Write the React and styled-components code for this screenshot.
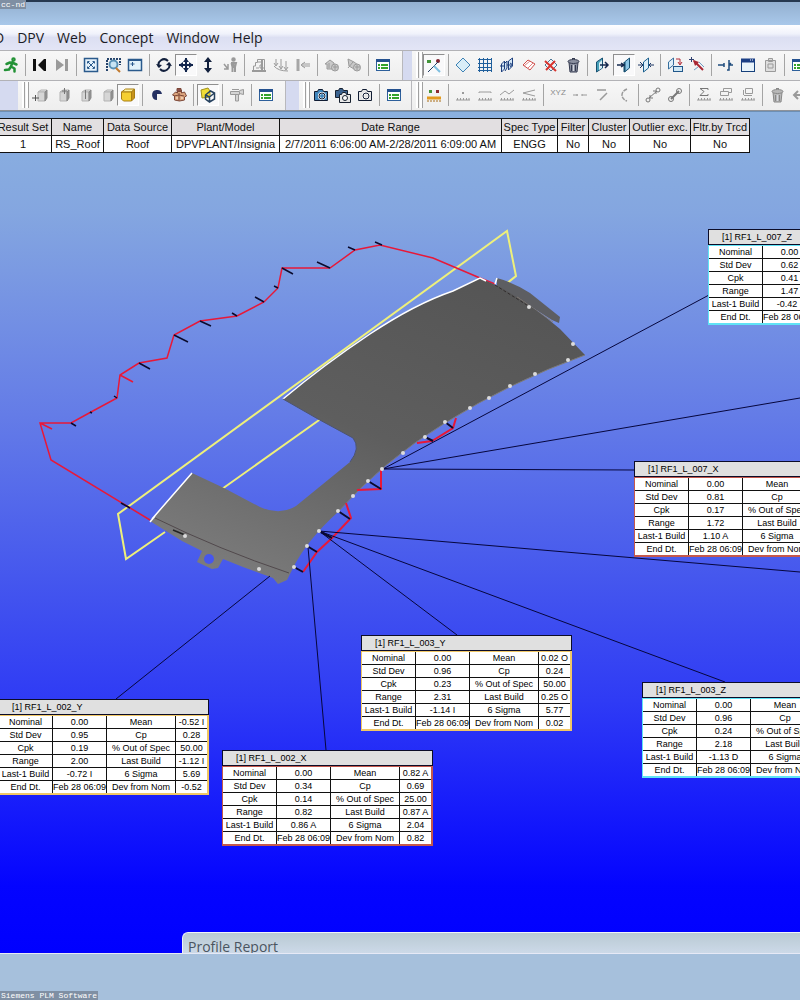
import styled, { createGlobalStyle } from 'styled-components';

const GlobalStyle = createGlobalStyle`
  * {
    box-sizing: border-box;
  }

  body {
    margin: 0;
    overflow: hidden;
    font-family: "Liberation Sans", Arial, sans-serif;
    color: #111;
  }
`;

const Shell = styled.div`
  display: flex;
  flex-direction: column;
  height: 100vh;
  overflow: hidden;
  background: #a6c0dc;
`;

const TitleBar = styled.header`
  flex: none;
  height: 25px;
  border-top: 2px solid #26384f;
  background: linear-gradient(#93b0d0, #a9c8ea);
`;

const Watermark = styled.span`
  position: absolute;
  left: 0;
  ${(p) => (p.$bottom ? 'bottom: 0;' : 'top: 0;')}
  padding: 0 1px;
  font: 8px/9px "Liberation Mono", monospace;
  color: #fff;
  background: #7f8fa3;
`;

const MenuBar = styled.nav`
  flex: none;
  display: flex;
  align-items: center;
  gap: 13px;
  height: 25px;
  margin-left: -6px;
  background: linear-gradient(#fff 0%, #f0f2fb 35%, #dcdff2 50%, #e3e5f6 100%);
`;

const MenuItem = styled.button`
  padding: 0;
  border: 0;
  background: none;
  font: 14px/20px "Open Sans", "Noto Sans", sans-serif;
  color: #1b1b25;
`;

const ToolRow = styled.div`
  flex: none;
  display: flex;
  height: 30px;
  overflow: hidden;
  background: #d5daf0;
  border-top: 1px solid #b2b2b6;
`;

const Toolbar = styled.div`
  flex: none;
  display: flex;
  align-items: center;
  padding-right: ${(p) => p.$end || 8}px;
  padding-bottom: 2px;
  margin-right: ${(p) => p.$gap || 0}px;
  background: linear-gradient(#f7f7f7, #eeeeee);
  border-right: 1px solid #b8b8bc;
`;

const Spacer = styled.div`
  flex: none;
  width: 18px;
`;

const Grip = styled.span`
  width: 11px;
  height: 26px;
  display: flex;
  gap: 1px;
  padding-left: 4px;

  &::before,
  &::after {
    content: "";
    width: 3px;
    background: #fff;
    border-right: 1px solid #a0a0a0;
  }
`;

const Separator = styled.span`
  width: 7px;
  height: 22px;
  background: linear-gradient(#a4a4a4, #a4a4a4) 3px 0 / 1px 100% no-repeat;
`;

const ToolButton = styled.button`
  width: 22px;
  height: 22px;
  display: grid;
  place-items: center;
  padding: 0;
  background: ${(p) => (p.$pressed ? '#f9f9fa' : 'none')};
  border: 1px solid transparent;
  ${(p) => p.$pressed && 'border-color: #8f8f8f #fff #fff #8f8f8f;'}
`;

const RowEdge = styled.div`
  flex: none;
  height: 2px;
  background: #6d8fb4;
  border-top: 1px solid #8e9299;
`;

const Viewport = styled.main`
  position: relative;
  flex: 1;
  overflow: hidden;
  padding-top: 6px;
  background: linear-gradient(#8bb1e0 0%, #84a6e0 12%, #647ce7 36%, #4152ef 58%, #2f3bf5 70%, #0404ff 92%, #0000ff 100%);
  border-bottom: 1px solid #e6e9f6;
`;

const ResultTable = styled.table`
  position: relative;
  margin-left: -6px;
  border-collapse: collapse;
  table-layout: fixed;
  width: 755px;
  font-size: 11px;
  line-height: 14px;
  background: #fff;

  th,
  td {
    height: 17px;
    padding: 0;
    border: 1px solid #111;
    font-weight: normal;
    text-align: center;
    white-space: nowrap;
  }

  th {
    background: #e2dfe1;
  }
`;

const Drawing = styled.svg`
  position: absolute;
  left: 0;
  top: 0;
`;

const Callout = styled.section`
  position: absolute;
  left: ${(p) => p.$x}px;
  top: ${(p) => p.$y}px;
  width: 211px;
  font-size: 9px;
  line-height: 11px;
  white-space: nowrap;
  color: #000;
`;

const CalloutTitle = styled.h2`
  height: 16px;
  margin: 0;
  padding: 0 0 0 13px;
  border: 1px solid #0c0c28;
  background: #e0e0e0;
  font-size: 9px;
  line-height: 14px;
  font-weight: normal;
`;

const CalloutTable = styled.table`
  width: 100%;
  height: 80px;
  table-layout: fixed;
  border-collapse: separate;
  border-spacing: 0;
  background: #fff;
  border: solid ${(p) => p.$tone};
  border-width: 1px 2px 2px 1px;

  td {
    padding: 0;
    text-align: center;
    border-right: 1px solid #111;
    border-bottom: 1px solid #111;
  }

  td:last-child {
    border-right: 0;
  }

  tr:last-child td {
    border-bottom: 0;
  }
`;

const DockTab = styled.div`
  position: absolute;
  left: 182px;
  right: 0;
  bottom: -1px;
  height: 22px;
  padding: 0 5px;
  overflow: hidden;
  border: 1px solid #eef2fa;
  border-right: 0;
  border-bottom-color: #46586c;
  border-radius: 6px 0 0 0;
  background: linear-gradient(#b9cad3, #ccd9e8);
  font: 14px/28px "Open Sans", "Noto Sans", sans-serif;
  color: #4b5560;
`;

const StatusArea = styled.footer`
  flex: none;
  height: 46px;
  background: #a6c0dc;
`;

const GREY = '#9a9a9a';

const ruler = (c = GREY) => <path d="M1 13h14M2.500 11v2M5.500 11v2M8.500 11v2M11.500 11v2M14 11v2" stroke={c} />;

const panel = (
  <g>
    <rect x="1.500" y="2.500" width="13" height="11" fill="#fff" stroke="#2d5f9b" />
    <path d="M1 3.500h14" stroke="#24518f" strokeWidth="3" />
    <path d="M3 8h2M3 11h2M6 8h7M6 11h7" stroke="#35a32c" strokeWidth="2" />
  </g>
);

const greyCube = (extra) => (
  <g>
    <path d="M6 5l3-2h6l-2 2z" fill="#e4e4e4" stroke="#b3b3b3" />
    <path d="M6 5h7v9H6z" fill="#d6d6d6" stroke="#b3b3b3" />
    <path d="M13 5l2-2v8l-2 3z" fill="#929292" stroke="#8a8a8a" />
    {extra}
  </g>
);

const camera = (body) => (
  <g stroke="#101c33">
    <path d="M1.500 4.500h3l1-2h4l1 2h4v9h-13z" fill={body} />
    <circle cx="9" cy="9" r="3" fill={body} stroke="#fff" strokeWidth="2" />
    <circle cx="9" cy="9" r="3" />
  </g>
);

const bin = (fill, line) => (
  <g stroke={line}>
    <path d="M4 5.500h9l-1 9.500H5z" fill={fill} />
    <ellipse cx="8.500" cy="4.500" rx="5.500" ry="2" fill={fill} />
    <path d="M6.500 8v6M10.500 8v6M7 1.500h3" />
    <path d="M8.500 8v6" stroke="#d4d7de" />
  </g>
);

const slab = (fill) => <path d="M5.500 5l5-4v10l-5 4z" fill={fill} stroke="#1c5f8e" />;

const glyphs = {
  run: (
    <g stroke="#239236" strokeWidth="2.500" strokeLinecap="round" strokeLinejoin="round">
      <path d="M9.500 5L8 9.500l3.500 2v3M8 9.500L6 12.500 2 13M3.500 7l3.500-1.500 3 .5 3.500 1.500" />
      <circle cx="10.500" cy="2.500" r="1" />
    </g>
  ),
  first: (
    <g fill="#111">
      <path d="M1 2h3v12H1zM12 2h2v12h-2zM12 2v12L6 8z" />
    </g>
  ),
  last: (
    <g fill={GREY}>
      <path d="M2 2l8 6-8 6zM11 2h3v12h-3z" />
    </g>
  ),
  fit: (
    <g stroke="#2a5a8c">
      <rect x="1.500" y="1.500" width="13" height="13" fill="#e4f1fa" strokeWidth="1.500" />
      <path d="M4.500 6.500v-2h2M9.500 4.500h2v2M11.500 9.500v2h-2M6.500 11.500h-2v-2M5 5l6 6M11 5l-6 6" />
    </g>
  ),
  zoomBox: (
    <g>
      <path d="M2 14V2h13v6" stroke="#26446b" strokeWidth="2" strokeDasharray="2 1" />
      <circle cx="8.500" cy="7.500" r="4" fill="#c9e5f4" stroke="#5a91b5" strokeWidth="2" />
      <path d="M11 11l4 4" stroke="#c27a2e" strokeWidth="2" />
    </g>
  ),
  box: (
    <g stroke="#2a5a8c">
      <rect x="1.500" y="2.500" width="13" height="11" fill="#e2f3fa" strokeWidth="1.500" />
      <path d="M1 3h14" strokeWidth="2" />
      <path d="M5.500 5v4M3.500 7h4" />
    </g>
  ),
  rotate: (
    <g stroke="#12203d" strokeWidth="2">
      <path d="M3 10a5.500 5.500 0 0 1 9-6M13 6a5.500 5.500 0 0 1-9 6" />
      <path d="M0 7l3 4 3-3zM16 9l-3-4-3 3z" fill="#12203d" stroke="none" />
    </g>
  ),
  pan: (
    <g fill="#12254c">
      <path d="M8 1v14M1 8h14" stroke="#12254c" strokeWidth="2" />
      <path d="M8 1l3 4H5zM8 15l3-4H5zM1 8l4-3v6zM15 8l-4-3v6z" />
    </g>
  ),
  upDown: (
    <g fill="#12203d">
      <path d="M8 3v10" stroke="#12203d" strokeWidth="2" />
      <path d="M8 0l4 5H4zM8 16l4-5H4z" />
    </g>
  ),
  walk: (
    <g stroke={GREY} strokeWidth="1.500">
      <path d="M2 7l4 5M6 7v5H2" />
      <path d="M9 6h5l-1 4v5M9.500 6l1 4v5M11.500 6v5" strokeWidth="2" />
      <circle cx="11.500" cy="2.500" r="1.500" fill={GREY} />
    </g>
  ),
  partDown: (
    <g stroke={GREY}>
      <path d="M1 14h14" strokeWidth="2" />
      <path d="M2.500 13V9h2V5.500h2v-3h7V13M7 5h4v3H9v3h4M5 11h3" />
      <path d="M11 3v10" strokeWidth="2" />
    </g>
  ),
  arrowsDown: (
    <g stroke={GREY}>
      <path d="M3 2v6M8 2v9M13 4v8M1 6l2 3 2-3M6 9l2 3 2-3M11 10l2 3 2-3M1 9q4 5 14 5" />
    </g>
  ),
  arrowLeft: (
    <g>
      <path d="M3 2v12" stroke="#a6a6a6" strokeWidth="3" />
      <path d="M10 5L6 8l4 3M7 7h8M7 9h8" stroke={GREY} />
    </g>
  ),
  houseA: (
    <g fill="#c9c9c9" stroke={GREY}>
      <path d="M1 7l5-4 4 3v6H3V7z" />
      <circle cx="11" cy="10.500" r="3.500" />
      <path d="M9 10h5M11 8v5M5 6v5" />
    </g>
  ),
  houseB: (
    <g fill="#c9c9c9" stroke={GREY}>
      <path d="M2 2l6 3 4 3-4 4-5-3z" />
      <circle cx="11" cy="10.500" r="3.500" />
      <path d="M2 11l5-6M9 10h5M11 8v5" />
    </g>
  ),
  report: panel,
  points: (
    <g>
      <path d="M1 3h4v3H1z" fill="#439439" />
      <circle cx="12" cy="4" r="2" fill="#7e2430" />
      <path d="M12 5L2 15" stroke="#213b63" />
      <path d="M8 9l6 6" stroke="#7dbfe0" strokeWidth="2" />
    </g>
  ),
  diamond: <path d="M8 1l7 7-7 7-7-7z" fill="#d9eef8" stroke="#3e82b5" />,
  grid: <path d="M2.500 1v14M6.500 1v14M10.500 1v14M14.500 1v14M1 2.500h14M1 6.500h14M1 10.500h14M1 13.500h14" stroke="#1f5f9c" />,
  layers: (
    <g stroke="#1d3f7d" fill="#d3e6f5">
      <path d="M2.500 7l3-3v8l-3 3zM9.500 4l4-3v8l-4 4z" />
      <path d="M6 6l2-2v7l-2 3M1 9h4M8 8h6M11 6l3 2-3 2" />
    </g>
  ),
  diamondRed: (
    <g>
      <path d="M7 3l7 4-5 6-7-5z" fill="#fff" stroke="#cf4c48" />
      <path d="M3 9l6-5M6 12l6-6" stroke="#e08080" />
    </g>
  ),
  diamondOff: (
    <g>
      <path d="M8 2l6 6-6 6-6-6z" fill="#eef4f8" stroke="#4c7696" />
      <path d="M2 4l11 10M12 4L3 13" stroke="#d8342f" strokeWidth="2" />
    </g>
  ),
  bin: bin('#8b90a0', '#353b50'),
  slabRight: (
    <g>
      <path d="M2.500 5l6-4v10l-6 4z" fill="#46a0b8" stroke="#164f70" />
      <path d="M5 6l3-3v8l-3 2z" fill="#d9eef4" />
      <path d="M6 8h8M11 5l3 3-3 3" stroke="#15284d" strokeWidth="1.500" />
    </g>
  ),
  slabLeft: (
    <g>
      <path d="M8.500 5l5-4v10l-5 4z" fill="#8cc6e6" stroke="#164f70" />
      <path d="M8.500 5v10" stroke="#164f70" strokeWidth="2" />
      <path d="M1 8h7M5 6l3 2-3 2" stroke="#15284d" strokeWidth="1.500" />
    </g>
  ),
  slabBoth: (
    <g>
      {slab('#dceffa')}
      <path d="M0 8h5M2 5l3 3-3 3M11 8h5M13 6l-2 2 2 2" stroke="#1c3765" />
    </g>
  ),
  copyPlane: (
    <g>
      <path d="M1.500 5l5-4v7l-5 4z" fill="#e0f0fa" stroke="#356e9d" />
      <path d="M9 2h4v5M11 5l2 3 2-3" stroke="#b42b36" />
      <rect x="6.500" y="9.500" width="9" height="5" fill="#cfe8f5" stroke="#21578a" />
    </g>
  ),
  pick: (
    <g>
      <path d="M2.500 0v5M0 2.500h5" stroke="#30406f" />
      <path d="M5 4l9 9" stroke="#a92734" strokeWidth="2" />
      <path d="M4 3l6 2-4 4z" fill="#a92734" />
      <path d="M10 5l5 5M5 13l4-3" stroke="#6f9cc4" />
    </g>
  ),
  axis: <path d="M0 8h6M9 13h2V8h4M11 3v5M13 6l-2 2M6 6v4" stroke="#1f4c7d" strokeWidth="1.500" />,
  window: (
    <g>
      <rect x="1.500" y="2.500" width="13" height="12" fill="#e9f4fb" stroke="#16407b" />
      <path d="M1 3.500h14" stroke="#1b3f86" strokeWidth="4" />
      <path d="M10 3h1M12 3h1" stroke="#fff" />
    </g>
  ),
  clipboard: (
    <g stroke={GREY}>
      <path d="M3.500 3.500h10v11h-10zM6.500 1.500h4v3h-4z" fill="#dedede" />
      <path d="M6 7h5v4H6z" />
    </g>
  ),
  cubeAdd: greyCube(<path d="M3.500 8v6M0 11h7" stroke="#555" />),
  cubeUp: greyCube(<path d="M10.500 1v6M8 4h5" stroke="#777" />),
  cubeLine: greyCube(<path d="M9.500 3v9" stroke="#777" />),
  cube: greyCube(null),
  cubeYellow: (
    <g stroke="#a97f12">
      <path d="M1.500 5l4-3h9l-3 3z" fill="#fff3a0" />
      <path d="M1.500 5h10v9h-8l-2-2z" fill="#f5cf31" />
      <path d="M11.500 5l3-3v9l-3 3z" fill="#c7931d" />
    </g>
  ),
  pie: <path d="M8 8V13A5 5 0 1 1 13 7H8z" fill="#243061" />,
  parts: (
    <g stroke="#7d4838">
      <path d="M1.500 8l3-3 2 1v-3h4v3l3-1 2 4-2 1v3l-5 1-5-1V9z" fill="#dda67e" />
      <path d="M6 1.500h4v3H6z" fill="#8c4f4a" />
      <path d="M8 6v8M3 9l5-1 5 1" />
      <path d="M5 11h2M10 11h2" stroke="#fff0dc" />
    </g>
  ),
  cubeWire: (
    <g>
      <path d="M1 3l7-2 2 3v6l-8 1z" fill="#f0dc35" stroke="#a1921e" />
      <path d="M5.500 8l5-4 4 2v6l-5 3-4-3zM5.500 8l4 2v5M9.500 10l5-4" stroke="#26425f" strokeWidth="1.500" />
    </g>
  ),
  pipe: (
    <g stroke={GREY} fill="#d5d5d5">
      <path d="M1.500 4.500h9v3h-9zM10.500 3.500l4-1v5l-4-1M6.500 8v6h3V8" />
      <path d="M3 2.500h7" />
    </g>
  ),
  camera: camera('#3f86bd'),
  cameras: (
    <g>
      <path d="M0.500 3.500h3l1-2h3l1 2h4v7h-12z" fill="#3a628f" stroke="#16202f" />
      <path d="M4.500 7.500h2l1-2h3l1 2h4v8h-11z" fill="#e8e8e8" stroke="#16202f" />
      <circle cx="10" cy="11" r="2.500" fill="#fff" stroke="#16202f" />
    </g>
  ),
  cameraPlain: camera('#e6e6e6'),
  pointsRuler: (
    <g>
      <path d="M3 3h3v3H3z" fill="#439439" />
      <path d="M10 3h3v3h-3z" fill="#8d2a2e" />
      <path d="M1 11h14" stroke="#e39a1f" strokeWidth="3" />
      <path d="M1 14h14" stroke="#a96c14" strokeDasharray="2 1" />
    </g>
  ),
  rulerDot: <g>{ruler()}<path d="M7 5h2v2H7z" fill={GREY} /></g>,
  rulerFlat: <g>{ruler()}<path d="M2 6V5h12v1" stroke={GREY} /></g>,
  rulerWave: <g>{ruler()}<path d="M1 8l5-4 4 3 5-4" stroke={GREY} /></g>,
  rulerCross: <g>{ruler()}<path d="M14 3L2 6l12 3" stroke={GREY} /></g>,
  xyz: (
    <text x="8" y="8" textAnchor="middle" fontSize="8" fontFamily="Liberation Sans, sans-serif" fill="#8a8a8a">
      XYZ
    </text>
  ),
  dash: <path d="M1 8h5M10 8h5M5 7v2M10 7v2" stroke={GREY} />,
  angle: <path d="M3 3h9M13 6l-7 7" stroke={GREY} strokeWidth="1.500" />,
  arc: <path d="M11 2q-5 2-5 6t5 6" stroke={GREY} strokeDasharray="4 1" strokeWidth="1.500" />,
  linkOpen: (
    <g stroke="#777">
      <path d="M4 11l8-7M5 8v3h3M8 4h3v3" />
      <circle cx="3" cy="13" r="2" />
      <circle cx="13" cy="3" r="2" />
    </g>
  ),
  linkClosed: (
    <g stroke="#777">
      <path d="M4 12l8-8" strokeWidth="2" />
      <circle cx="4" cy="12" r="2.500" />
      <circle cx="12" cy="4" r="2.500" />
    </g>
  ),
  sum: <g>{ruler()}<path d="M12 3V1.500H4l4 3-4 4h8V7" stroke="#777" /></g>,
  stack: <g>{ruler()}<path d="M2.500 4.500h8v4h-8zM5.500 4V1.500h8v4h-3" stroke={GREY} /></g>,
  monitor: <g>{ruler()}<path d="M5.500 1.500h7v5h-7zM4 8.500h8M3.500 3v5" stroke={GREY} /></g>,
  binGrey: bin('#b8b8b8', '#888888'),
  undo: <path d="M4 8h6q4 1 3 5M7 4L3 8l4 4" stroke={GREY} strokeWidth="2" />,
};

const BAR = '|';

// An asterisk marks a tool that is held down.
const mainTools = [
  'run', BAR, 'first', 'last', BAR, 'fit', 'zoomBox', 'box', BAR,
  'rotate', '*pan', 'upDown', 'walk', BAR, 'partDown', 'arrowsDown', 'arrowLeft', BAR,
  'houseA', 'houseB', BAR, 'report',
];
const planeTools = [
  '*points', BAR, 'diamond', 'grid', 'layers', 'diamondRed', 'diamondOff', 'bin', BAR,
  'slabRight', '*slabLeft', 'slabBoth', BAR, 'copyPlane', 'pick', BAR,
  'axis', 'window', 'clipboard', BAR, 'report',
];
const cubeTools = [
  'cubeAdd', 'cubeUp', 'cubeLine', 'cube', '*cubeYellow', BAR, 'pie', 'parts', BAR,
  '*cubeWire', BAR, 'pipe', BAR, 'report',
];
const cameraTools = ['camera', 'cameras', 'cameraPlain', BAR, 'report'];
const measureTools = [
  'pointsRuler', BAR, 'rulerDot', 'rulerFlat', 'rulerWave', 'rulerCross', BAR,
  'xyz', 'dash', 'angle', 'arc', BAR, 'linkOpen', 'linkClosed', BAR,
  'sum', 'stack', 'monitor', BAR, 'binGrey', 'undo',
];

const Tools = ({ items }) =>
  items.map((item, i) => {
    if (item === BAR) return <Separator key={i} />;
    const pressed = item.startsWith('*');
    const name = pressed ? item.slice(1) : item;
    return (
      <ToolButton key={i} $pressed={pressed} aria-label={name} aria-pressed={pressed}>
        <svg width="16" height="16" viewBox="0 0 16 16" fill="none">{glyphs[name]}</svg>
      </ToolButton>
    );
  });

const menus = ['D', 'DPV', 'Web', 'Concept', 'Window', 'Help'];

const results = [
  { label: 'Result Set', value: '1', width: 57 },
  { label: 'Name', value: 'RS_Roof', width: 52 },
  { label: 'Data Source', value: 'Roof', width: 68 },
  { label: 'Plant/Model', value: 'DPVPLANT/Insignia', width: 108 },
  { label: 'Date Range', value: '2/7/2011 6:06:00 AM-2/28/2011 6:09:00 AM', width: 222 },
  { label: 'Spec Type', value: 'ENGG', width: 56 },
  { label: 'Filter', value: 'No', width: 31 },
  { label: 'Cluster', value: 'No', width: 41 },
  { label: 'Outlier exc.', value: 'No', width: 61 },
  { label: 'Fltr.by Trcd', value: 'No', width: 59 },
];

const CYAN = '#5fe3f5';
const AMBER = '#f0c765';
const RUST = '#c4584c';

const callouts = [
  { name: 'RF1_L_007_Z', x: 708, y: 117, tone: CYAN, left: ['0.00', '0.62', '0.41', '1.47', '-0.42 I', 'Feb 28 06:09'] },
  { name: 'RF1_L_007_X', x: 634, y: 349, tone: RUST, left: ['0.00', '0.81', '0.17', '1.72', '1.10 A', 'Feb 28 06:09'] },
  {
    name: 'RF1_L_003_Y', x: 361, y: 523, tone: AMBER,
    left: ['0.00', '0.96', '0.23', '2.31', '-1.14 I', 'Feb 28 06:09'],
    right: ['0.02 O', '0.24', '50.00', '0.25 O', '5.77', '0.02'],
  },
  { name: 'RF1_L_003_Z', x: 642, y: 570, tone: CYAN, left: ['0.00', '0.96', '0.24', '2.18', '-1.13 D', 'Feb 28 06:09'] },
  {
    name: 'RF1_L_002_Y', x: -2, y: 587, tone: AMBER,
    left: ['0.00', '0.95', '0.19', '2.00', '-0.72 I', 'Feb 28 06:09'],
    right: ['-0.52 I', '0.28', '50.00', '-1.12 I', '5.69', '-0.52'],
  },
  {
    name: 'RF1_L_002_X', x: 222, y: 638, tone: RUST,
    left: ['0.00', '0.34', '0.14', '0.82', '0.86 A', 'Feb 28 06:09'],
    right: ['0.82 A', '0.69', '25.00', '0.87 A', '2.04', '0.82'],
  },
];

const leftLabels = ['Nominal', 'Std Dev', 'Cpk', 'Range', 'Last-1 Build', 'End Dt.'];
const rightLabels = ['Mean', 'Cp', '% Out of Spec', 'Last Build', '6 Sigma', 'Dev from Nom'];

const MeasureCallout = ({ name, x, y, tone, left, right = [] }) => (
  <Callout $x={x} $y={y}>
    <CalloutTitle>[1] {name}</CalloutTitle>
    <CalloutTable $tone={tone}>
      <colgroup>
        <col width="54" />
        <col width="54" />
        <col width="69" />
        <col />
      </colgroup>
      <tbody>
        {leftLabels.map((label, i) => (
          <tr key={label}>
            <td>{label}</td>
            <td>{left[i]}</td>
            <td>{rightLabels[i]}</td>
            <td>{right[i]}</td>
          </tr>
        ))}
      </tbody>
    </CalloutTable>
  </Callout>
);

const gauges = [
  [568, 360], [535, 374], [510, 386], [489, 398], [470, 408], [445, 422], [425, 437],
  [403, 453], [382, 469], [368, 481], [353, 496], [338, 511], [319, 531], [307, 546],
  [294, 567], [529, 307], [573, 344], [259, 569], [185, 536],
];

const RoofModel = () => (
  <Drawing width="800" height="840" viewBox="0 112 800 840" fill="none" aria-label="Roof panel">
    <defs>
      <linearGradient id="steel" x1="0.8" y1="0" x2="0.2" y2="1">
        <stop offset="0" stopColor="#555" />
        <stop offset="0.5" stopColor="#5e5e5e" />
        <stop offset="1" stopColor="#7c7c7c" />
      </linearGradient>
    </defs>

    <path d="M165 532L126 559 118 514 507 231 516 276 506 284M222 489L322 418" stroke="#eef07a" strokeWidth="2" />

    <path
      d="M150 520L51 460 40 423 71 423 91 412 117 398 120 375 139 363 167 358 174 335 200 321 237 316 264 302 278 288 282 268 330 268 355 250 380 245 433 258 480 278 495 284M120 375l13 7M40 423l12 6"
      stroke="#e81838"
      strokeWidth="1.500"
    />
    <path
      d="M71 423l5 3M90 412l2 1M114 396l3 2M139 363l11 6M174 335l14 7M200 321l11 5M232 313l5 3M255 297l9 5M274 286l4 2M282 268l11 6M317 262l13 6M348 247l7 3M375 242l7 3M121 503l9 5"
      stroke="#0a0a2c"
      strokeWidth="1.500"
    />

    <path d="M497 278Q515 283 530 293L560 317 559 323 552 320 530 306 497 287z" fill="#5d5e62" />
    <path d="M517 297L553 322" stroke="#8b8178" />

    <path
      d="M150 521L192 473 224 488 260 507Q280 516 296 506L350 462Q361 448 353 438L318 419 283 399Q325 364 370 334T453 291L480 278 500 287Q535 307 560 329L585 355Q510 382 445 423 383 461 338 512 307 540 293 568L287 580 278 584 273 578 243 567 223 559 218 568 212 569 197 562 202 551 182 541z"
      fill="url(#steel)"
    />
    <path d="M283 399Q325 364 370 334T453 291L480 278 486 281M152 519L192 473M150 522l5-6M495 284l2-6" stroke="#fff" strokeWidth="1.500" />
    <path d="M283 399l35 20 35 19q8 10-3 24" stroke="#4c5470" />
    <path d="M155 518Q220 550 289 573" stroke="#51494c" />
    <path d="M495 285L530 307" stroke="#332e2e" strokeDasharray="3 2" />
    <path d="M585 355Q510 382 445 423 383 461 338 512" stroke="#7d7a74" />
    <path d="M173 530l12 5" stroke="#222" strokeWidth="1.500" />
    <circle cx="209" cy="559" r="5" fill="#4656ee" />

    <path
      d="M417 443L432 441 453 428 456 418M357 490L381 489 381 469M346 503L351 518 332 538 317 552 303 572"
      stroke="#e81838"
      strokeWidth="2"
    />
    <path
      d="M445 422l8 6M425 437l8 4M368 481l13 8M338 511l12 8M319 531l13 7M307 546l10 6M294 567l9 5"
      stroke="#0a0a2c"
      strokeWidth="2"
    />
    <path
      d="M383 469L709 295M383 469L800 398M383 469L635 470M319 531L800 572M319 531L457 635M319 531L725 682M308 547L326 750M270 576L116 699"
      stroke="#06063c"
    />
    {gauges.map(([cx, cy]) => (
      <circle key={cx} cx={cx} cy={cy} r="2" fill="#dcdcdc" />
    ))}
  </Drawing>
);

const App = () => (
  <Shell>
    <GlobalStyle />
    <TitleBar>
      <Watermark>cc-nd</Watermark>
    </TitleBar>

    <MenuBar>
      {menus.map((menu) => (
        <MenuItem key={menu}>{menu}</MenuItem>
      ))}
    </MenuBar>

    <ToolRow>
      <Toolbar $gap={9}>
        <Tools items={mainTools} />
      </Toolbar>
      <Toolbar>
        <Grip />
        <Tools items={planeTools} />
      </Toolbar>
    </ToolRow>
    <ToolRow>
      <Spacer />
      <Toolbar $gap={13}>
        <Grip />
        <Tools items={cubeTools} />
      </Toolbar>
      <Toolbar $end={6}>
        <Grip />
        <Tools items={cameraTools} />
      </Toolbar>
      <Toolbar>
        <Grip />
        <Tools items={measureTools} />
      </Toolbar>
    </ToolRow>
    <RowEdge />

    <Viewport>
      <RoofModel />
      <ResultTable>
        <colgroup>
          {results.map((r) => (
            <col key={r.label} width={r.width} />
          ))}
        </colgroup>
        <thead>
          <tr>
            {results.map((r) => (
              <th key={r.label}>{r.label}</th>
            ))}
          </tr>
        </thead>
        <tbody>
          <tr>
            {results.map((r) => (
              <td key={r.label}>{r.value}</td>
            ))}
          </tr>
        </tbody>
      </ResultTable>
      {callouts.map((callout) => (
        <MeasureCallout key={callout.name} {...callout} />
      ))}
      <DockTab>Profile Report</DockTab>
    </Viewport>

    <StatusArea>
      <Watermark $bottom>Siemens PLM Software</Watermark>
    </StatusArea>
  </Shell>
);

export default App;
